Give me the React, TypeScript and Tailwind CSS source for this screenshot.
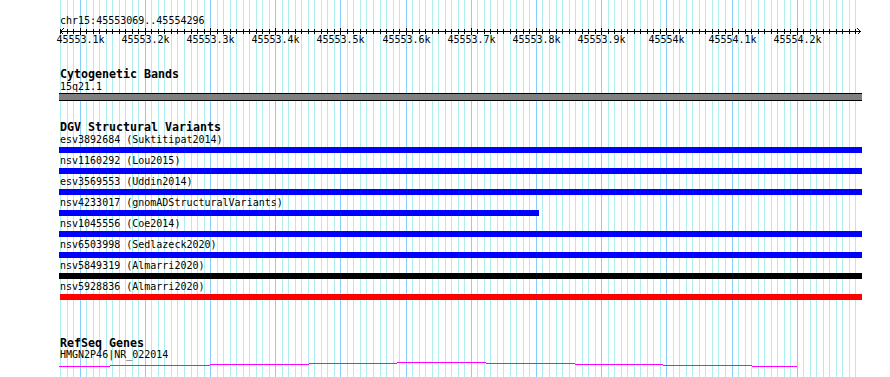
import React from "react";

const START = 45553069;
const END = 45554296;
const X0 = 60;
const SCALE = 0.6518;
const TRACK_LEFT = 59;
const TRACK_W = 803;

const xOf = (p: number) => Math.floor(X0 + (p - START) * SCALE);

type Variant = { name: string; color: string; start?: number; end?: number };

const variants: Variant[] = [
  { name: "esv3892684 (Suktitipat2014)", color: "bg-[#0000ff]" },
  { name: "nsv1160292 (Lou2015)", color: "bg-[#0000ff]" },
  { name: "esv3569553 (Uddin2014)", color: "bg-[#0000ff]" },
  { name: "nsv4233017 (gnomADStructuralVariants)", color: "bg-[#0000ff]", end: 539 },
  { name: "nsv1045556 (Coe2014)", color: "bg-[#0000ff]" },
  { name: "nsv6503998 (Sedlazeck2020)", color: "bg-[#0000ff]" },
  { name: "nsv5849319 (Almarri2020)", color: "bg-black" },
  { name: "nsv5928836 (Almarri2020)", color: "bg-[#ff0000]", start: 60 },
];

// gene glyph steps: [x1, x2, y]
const geneSteps: [number, number, number][] = [
  [59, 110, 366],
  [110, 210, 365],
  [210, 309, 364],
  [309, 397, 363],
  [397, 486, 362],
  [486, 575, 363],
  [575, 663, 364],
  [663, 752, 365],
  [752, 797, 366],
];

const gridPositions: number[] = [];
for (let p = Math.ceil(START / 10) * 10; p <= END; p += 10) gridPositions.push(p);

const Grid = () => (
  <svg
    className="absolute inset-0"
    width={890}
    height={377}
    shapeRendering="crispEdges"
  >
    {gridPositions.map((p) => {
      const x = xOf(p) + 0.5;
      const major = p % 100 === 0;
      return (
        <line
          key={p}
          x1={x}
          x2={x}
          y1={0}
          y2={377}
          stroke={major ? "#87cefa" : "#afeeee"}
          strokeWidth={1}
        />
      );
    })}
    {/* ruler */}
    <line x1={60} x2={861} y1={31.5} y2={31.5} stroke="#000" />
    {gridPositions.map((p) => {
      const x = xOf(p) + 0.5;
      const major = p % 100 === 0;
      return (
        <line
          key={"t" + p}
          x1={x}
          x2={x}
          y1={major ? 28 : 29}
          y2={major ? 35 : 34}
          stroke="#000"
        />
      );
    })}
    <polyline points="63.5,28.5 60.5,31.5 63.5,34.5" fill="none" stroke="#000" />
    <polyline points="857.5,28.5 860.5,31.5 857.5,34.5" fill="none" stroke="#000" />
  </svg>
);

const TrackTitle = ({ children }: { children: React.ReactNode }) => (
  <div className="pl-[60px] h-[12px] text-[11.63px] leading-[12px] font-bold whitespace-nowrap">
    {children}
  </div>
);

const Label = ({ children }: { children: React.ReactNode }) => (
  <div className="pl-[60px] h-[10px] text-[10px] leading-[10px] whitespace-nowrap">
    {children}
  </div>
);

const App = () => {
  const majors = gridPositions.filter((p) => p % 100 === 0);
  return (
    <div className="relative w-[890px] h-[377px] bg-white overflow-hidden text-black [font-family:'DejaVu_Sans_Mono',monospace]">
      <Grid />
      <div className="relative flex flex-col">
        {/* ruler */}
        <div className="relative h-[46px]">
          <div className="pt-[16px]">
            <Label>
              chr15:{START}..{END}
            </Label>
          </div>
          {majors.map((p) => (
            <span
              key={p}
              className="absolute top-[35px] -translate-x-1/2 text-[10px] leading-[10px] whitespace-nowrap"
              style={{ left: xOf(p) + 0.5 }}
            >
              {p / 1000}k
            </span>
          ))}
        </div>

        {/* cytogenetic bands */}
        <div className="mt-[22px] flex flex-col">
          <TrackTitle>Cytogenetic Bands</TrackTitle>
          <div className="mt-[2px]">
            <Label>15q21.1</Label>
          </div>
          <div className="mt-[1px] ml-[59px] w-[803px] h-[8px] bg-[#808080] border-y border-black" />
        </div>

        {/* DGV */}
        <div className="mt-[20px] flex flex-col">
          <TrackTitle>DGV Structural Variants</TrackTitle>
          <div className="mt-[2px] flex flex-col gap-[3px]">
            {variants.map((v) => {
              const s = v.start ?? TRACK_LEFT;
              const e = v.end ?? TRACK_LEFT + TRACK_W;
              return (
                <div key={v.name} className="flex flex-col">
                  <Label>{v.name}</Label>
                  <div
                    className={`mt-[2px] h-[6px] ${v.color}`}
                    style={{ marginLeft: s, width: e - s }}
                  />
                </div>
              );
            })}
          </div>
        </div>

        {/* RefSeq */}
        <div className="mt-[37px] flex flex-col">
          <TrackTitle>RefSeq Genes</TrackTitle>
          <div className="mt-[1px]">
            <Label>HMGN2P46|NR_022014</Label>
          </div>
          <svg
            className="ml-[59px]"
            width={TRACK_W}
            height={8}
            shapeRendering="crispEdges"
          >
            {geneSteps.map(([a, b, y], i) => (
              <line
                key={i}
                x1={a - TRACK_LEFT}
                x2={b - TRACK_LEFT}
                y1={y - 360 + 0.5}
                y2={y - 360 + 0.5}
                stroke="#ff00ff"
                strokeWidth={1}
              />
            ))}
          </svg>
        </div>
      </div>
    </div>
  );
};

export default App;
